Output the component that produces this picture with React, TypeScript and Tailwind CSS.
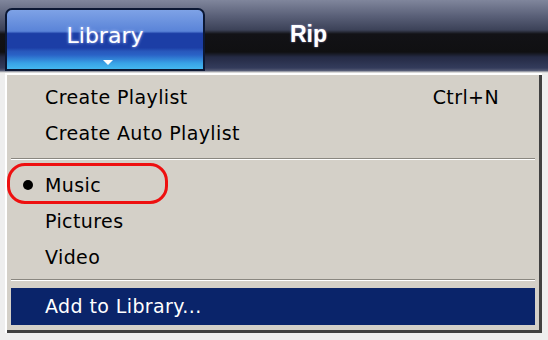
import React from "react";

const font = { fontFamily: '"DejaVu Sans", Verdana, sans-serif' };

function Row({ children, right, bullet }: { children: React.ReactNode; right?: string; bullet?: boolean }) {
  return (
    <div className="relative flex h-[36px] items-center pl-[38px] pr-[40px] text-[19px] tracking-[0.4px] text-black">
      {bullet && <span className="absolute left-[16px] top-[13px] h-[10px] w-[10px] rounded-full bg-black" />}
      <span className="flex-1">{children}</span>
      {right && <span>{right}</span>}
    </div>
  );
}

function Sep({ className }: { className: string }) {
  return (
    <div className={className}>
      <div className="mx-[4px] h-[2px] border-t border-b border-t-[#8a8780] border-b-white" />
    </div>
  );
}

export default function App() {
  return (
    <div className="h-[340px] w-[548px] overflow-hidden bg-[#eeeeee]" style={font}>
      <div className="flex h-[73px] items-end bg-[linear-gradient(to_bottom,#80869c_0px,#5a6078_16px,#3c4258_30px,#121216_34px,#101012_52px,#242a44_57px,#343c5c_68px,#5a6078_71px,#d8d8d8_72px)] pl-[5px]">
        <div className="relative mb-[2px] flex h-[63px] w-[200px] justify-center rounded-t-[7px] border-2 border-[#0c1834] bg-[linear-gradient(to_bottom,#7ea2e6_0%,#5a84d8_36%,#1c3ea6_40%,#1c3ea6_64%,#2858bc_70%,#2a62c6_76%,#38a2e6_90%,#44b8f0_100%)]">
          <span className="mt-[15px] text-[22px] leading-none text-white [text-shadow:0_0_3px_#b8c8ff]">Library</span>
          <span className="absolute left-[96px] top-[50px] h-0 w-0 border-x-[5px] border-t-[5px] border-x-transparent border-t-white" />
        </div>
        <span className="mb-[27px] ml-[85px] text-[23px] font-bold leading-none text-white [text-shadow:0_0_2px_#9090c0]" style={{ fontFamily: '"Liberation Sans", Arial, sans-serif' }}>Rip</span>
      </div>
      <div className="ml-[5px] w-[537px] border-t-2 border-l-2 border-t-white border-l-white">
        <div className="border-b-[3px] border-r-[3px] border-b-[#404040] border-r-[#404040] bg-[#d4d0c8] pt-[4px] pb-[5px]">
          <Row right="Ctrl+N">Create Playlist</Row>
          <Row>Create Auto Playlist</Row>
          <Sep className="flex h-[16px] flex-col justify-center" />
          <div className="relative">
            <Row bullet>Music</Row>
            <div className="absolute left-[0px] top-[-4px] h-[41px] w-[161px] rounded-[18px] border-[3px] border-[#ee1010]" />
          </div>
          <Row>Pictures</Row>
          <Row>Video</Row>
          <Sep className="flex h-[13px] flex-col justify-start pt-[4px]" />
          <div className="mx-[4px] flex h-[37px] items-center bg-[#0a246a] pl-[34px] text-[19px] tracking-[0.4px] text-white">Add to Library...</div>
        </div>
      </div>
    </div>
  );
}
